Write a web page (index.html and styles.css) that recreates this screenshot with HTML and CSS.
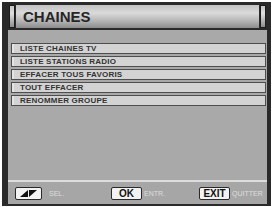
FILE: index.html
```html
<!DOCTYPE html>
<html lang="fr">
<head>
    <meta charset="UTF-8">
    <title>Chaines</title>
    <link rel="stylesheet" href="styles.css">
</head>
<body>
    <div class="screen">
        <div class="header">
            <div class="tab"></div>
            <div class="title">CHAINES</div>
            <div class="tab"></div>
        </div>
        <div class="content">
            <div class="item">LISTE CHAINES TV</div>
            <div class="item">LISTE STATIONS RADIO</div>
            <div class="item">EFFACER TOUS FAVORIS</div>
            <div class="item">TOUT EFFACER</div>
            <div class="item">RENOMMER GROUPE</div>
        </div>
        <div class="footer">
            <div class="key-group group-sel">
                <span class="key key-arrows">
                    <svg width="17" height="7" viewBox="0 0 17 7">
                        <polygon points="0,7 8,0 8,7" fill="#111"/>
                        <polygon points="9,0 17,0 9,7" fill="#111"/>
                    </svg>
                </span>
                <span class="label label-sel">SEL.</span>
            </div>
            <div class="key-group group-ok">
                <span class="key key-ok">OK</span>
                <span class="label">ENTR.</span>
            </div>
            <div class="key-group">
                <span class="key key-exit">EXIT</span>
                <span class="label">QUITTER</span>
            </div>
        </div>
    </div>
</body>
</html>
```

FILE: styles.css
```css
body {
    margin: 0;
    background: #fff;
    font-family: "Liberation Sans", Arial, sans-serif;
}
.screen {
    margin: 2px 0 0 2px;
    width: 269px;
    height: 204px;
    box-sizing: border-box;
    background: #2a2a2a;
    padding: 3px 4px 2px 6px;
    display: flex;
    flex-direction: column;
}
.header {
    height: 23px;
    display: flex;
    border-bottom: 2px solid #2a2a2a;
}
.tab {
    width: 4px;
    margin: 0 1px;
    border: 1px solid #1c1c1c;
    background: linear-gradient(to bottom, #c4c4c4, #e0e0e0 35%, #8e8e8e);
}
.title {
    flex: 1;
    background: linear-gradient(to bottom, #c2c2c2, #dadada 35%, #b4b4b4 70%, #8c8c8c);
    font-size: 15px;
    font-weight: bold;
    color: #262626;
    line-height: 23px;
    padding-left: 7px;
}
.content {
    flex: 1;
    background: #a9a9a9;
    padding: 13px 1px 0 3px;
    display: flex;
    flex-direction: column;
    gap: 2px;
}
.item {
    height: 11px;
    box-sizing: border-box;
    border: 1px solid #4e4e4e;
    background: #d3d3d3;
    box-shadow: inset 2px 0 0 #e4e4e4;
    font-size: 8px;
    font-weight: bold;
    letter-spacing: 0.2px;
    color: #333;
    line-height: 9px;
    padding-left: 8px;
}
.footer {
    height: 22px;
    border-top: 2px solid #dcdcdc;
    background: #a6a6a6;
    display: flex;
    align-items: center;
    padding-left: 7px;
}
.key-group {
    display: flex;
    align-items: center;
}
.group-sel {
    width: 96px;
}
.group-ok {
    width: 88px;
}
.key {
    height: 13px;
    box-sizing: border-box;
    border: 1px solid #2a2a2a;
    border-radius: 2px;
    background: #f2f2f2;
    display: flex;
    align-items: center;
    justify-content: center;
    font-size: 10px;
    font-weight: bold;
    color: #111;
}
.key-arrows {
    width: 27px;
}
.key-ok {
    width: 31px;
}
.key-exit {
    width: 31px;
}
.label {
    font-size: 7px;
    color: #dedede;
    margin-left: 2px;
}
.label-sel {
    margin-left: 7px;
}
```
